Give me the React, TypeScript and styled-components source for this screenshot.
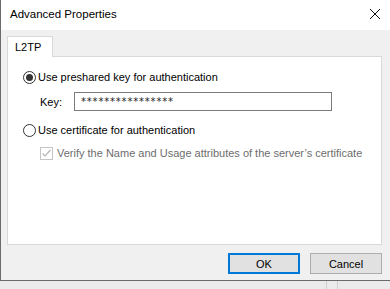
import React, { useState } from 'react';
import styled, { createGlobalStyle } from 'styled-components';

const GlobalStyle = createGlobalStyle`
  html, body {
    margin: 0;
    padding: 0;
    background: #e9e9e9;
  }
  body {
    font-family: "Liberation Sans", Arial, sans-serif;
    font-size: 11px;
    color: #000;
  }
`;

const Screen = styled.div`
  width: 390px;
  height: 289px;
  overflow: hidden;
  display: flex;
  flex-direction: column;
`;

const Window = styled.div`
  height: 281px;
  flex-shrink: 0;
  display: flex;
  flex-direction: column;
  border-left: 1px solid #6b6b6b;
  border-bottom: 1px solid #6b6b6b;
  box-sizing: border-box;
  background: #f0f0f0;
`;

const TitleBar = styled.div`
  height: 30px;
  flex-shrink: 0;
  background: #fff;
  display: flex;
  align-items: center;
  justify-content: space-between;
  padding: 0 9px 0 9px;
`;

const Title = styled.span`
  font-size: 11.5px;
  line-height: 16px;
  margin-top: -2px;
`;

const CloseButton = styled.button`
  width: 12px;
  height: 12px;
  padding: 0;
  border: none;
  background: none;
  display: flex;
  margin-top: -2px;
`;

const Body = styled.div`
  flex: 1;
  display: flex;
  flex-direction: column;
  padding: 6px 8px 0 6px;
`;

const TabStrip = styled.div`
  display: flex;
  height: 21px;
  position: relative;
  z-index: 1;
`;

const Tab = styled.div<{ $active?: boolean }>`
  width: 46px;
  box-sizing: border-box;
  height: 21px;
  background: ${({ $active }) => ($active ? '#fff' : '#f0f0f0')};
  border: 1px solid #d9d9d9;
  border-bottom: none;
  padding: 0 0 0 7px;
  display: flex;
  align-items: center;
  font-size: 11px;
`;

const TabPanel = styled.div`
  height: 189px;
  box-sizing: border-box;
  margin-top: -1px;
  background: #fff;
  border: 1px solid #d9d9d9;
  padding: 12px 0 0 15px;
  display: flex;
  flex-direction: column;
`;

const OptionRow = styled.label<{ $indent?: number; $gap?: number }>`
  display: flex;
  align-items: center;
  height: 16px;
  margin-left: ${({ $indent }) => $indent ?? 0}px;
  margin-top: ${({ $gap }) => $gap ?? 0}px;
  gap: 2px;
`;

const RadioCircle = styled.span<{ $checked: boolean }>`
  width: 13px;
  height: 13px;
  box-sizing: border-box;
  border-radius: 50%;
  border: 1px solid #333;
  background: #fff;
  display: flex;
  align-items: center;
  justify-content: center;
  flex-shrink: 0;

  &::after {
    content: '';
    width: 7px;
    height: 7px;
    border-radius: 50%;
    background: ${({ $checked }) => ($checked ? '#333' : 'transparent')};
  }
`;

const OptionText = styled.span<{ $disabled?: boolean }>`
  font-size: 11px;
  color: ${({ $disabled }) => ($disabled ? '#6d6d6d' : '#000')};
  white-space: nowrap;
`;

const CheckBox = styled.span`
  width: 13px;
  height: 13px;
  box-sizing: border-box;
  border: 1px solid #c5c5c5;
  background: #fff;
  display: flex;
  flex-shrink: 0;
  margin-right: 2px;
`;

const KeyRow = styled.div`
  display: flex;
  align-items: center;
  margin: 7px 0 0 17px;
  height: 19px;
`;

const KeyLabel = styled.span`
  width: 34px;
  font-size: 11px;
`;

const KeyInput = styled.div`
  width: 258px;
  height: 19px;
  box-sizing: border-box;
  border: 1px solid #7a7a7a;
  padding: 0 6px;
  display: flex;
  align-items: center;
  font-size: 10px;
  letter-spacing: 0.8px;
  font-family: "DejaVu Sans", sans-serif;
  color: #222;
`;

const ButtonBar = styled.div`
  display: flex;
  justify-content: flex-end;
  gap: 10px;
  padding-top: 8px;
`;

const DialogButton = styled.button<{ $default?: boolean }>`
  width: 72px;
  height: 21px;
  box-sizing: border-box;
  font-family: "Liberation Sans", Arial, sans-serif;
  font-size: 11px;
  color: #000;
  background: #e1e1e1;
  border: ${({ $default }) => ($default ? '2px solid #0078d7' : '1px solid #adadad')};
  padding: 0;
  display: flex;
  align-items: center;
  justify-content: center;
`;

const Backdrop = styled.div`
  flex: 1;
  background: #ebebeb;
  display: flex;
  padding-left: 326px;
  gap: 10px;
`;

const BackdropLine = styled.span`
  width: 1px;
  background: #cfcfcf;
`;

const App: React.FC = () => {
  const [usePsk, setUsePsk] = useState(true);

  return (
    <>
      <GlobalStyle />
      <Screen>
        <Window>
          <TitleBar>
            <Title>Advanced Properties</Title>
            <CloseButton aria-label="Close">
              <svg width="12" height="12" viewBox="0 0 12 12">
                <path d="M1 1 L11 11 M11 1 L1 11" stroke="#111" strokeWidth="1" fill="none" />
              </svg>
            </CloseButton>
          </TitleBar>
          <Body>
            <TabStrip>
              <Tab $active>L2TP</Tab>
            </TabStrip>
            <TabPanel>
              <OptionRow onClick={() => setUsePsk(true)}>
                <RadioCircle $checked={usePsk} />
                <OptionText>Use preshared key for authentication</OptionText>
              </OptionRow>
              <KeyRow>
                <KeyLabel>Key:</KeyLabel>
                <KeyInput>****************</KeyInput>
              </KeyRow>
              <OptionRow $gap={11} onClick={() => setUsePsk(false)}>
                <RadioCircle $checked={!usePsk} />
                <OptionText>Use certificate for authentication</OptionText>
              </OptionRow>
              <OptionRow $gap={7} $indent={17}>
                <CheckBox>
                  <svg width="11" height="11" viewBox="0 0 11 11">
                    <path d="M1.5 5.5 L4 8 L9.5 2" stroke="#b5b5b5" strokeWidth="1.2" fill="none" />
                  </svg>
                </CheckBox>
                <OptionText $disabled>
                  Verify the Name and Usage attributes of the server’s certificate
                </OptionText>
              </OptionRow>
            </TabPanel>
            <ButtonBar>
              <DialogButton $default>OK</DialogButton>
              <DialogButton>Cancel</DialogButton>
            </ButtonBar>
          </Body>
        </Window>
        <Backdrop>
          <BackdropLine />
          <BackdropLine />
        </Backdrop>
      </Screen>
    </>
  );
};

export default App;
